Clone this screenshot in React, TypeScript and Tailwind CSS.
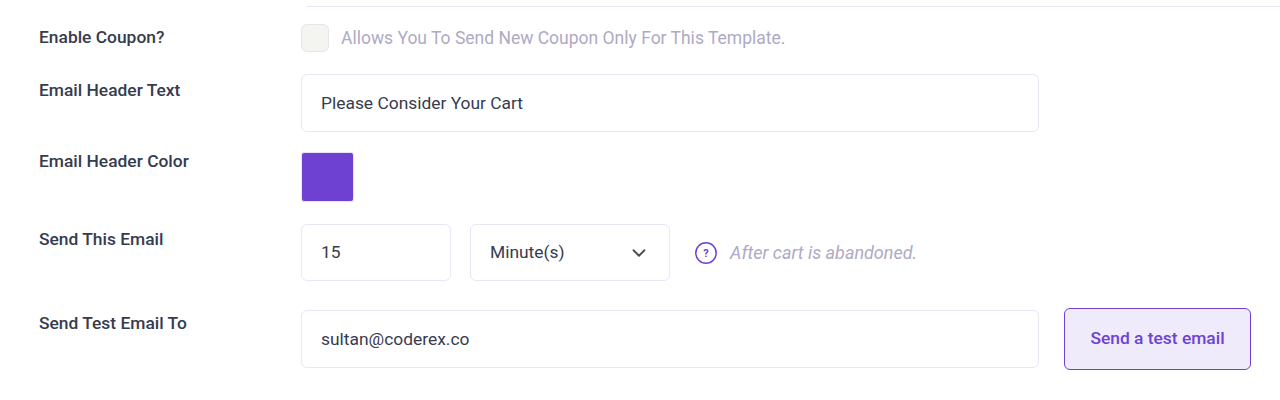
import React from 'react';
import { ChevronDown } from 'lucide-react';

const inputClass =
    'h-[58px] rounded-md border border-[#e9e6f5] bg-white px-[19px] text-[17.4px] text-[#363b4e] outline-none';

const Label: React.FC<{ text: string; className?: string }> = ({ text, className }) => (
    <label className={`w-[262px] shrink-0 text-[17.4px] leading-[24px] font-medium text-[#363b4e] ${className ?? ''}`}>
        {text}
    </label>
);

const App: React.FC = () => {
    return (
        <div className="h-[400px] w-[1280px] overflow-hidden bg-white font-['Roboto',sans-serif]">
            <div className="ml-[307px] h-[7px] border-b border-[#e9e6f5]" />

            <div className="mt-[17px] flex pl-[39px]">
                <Label text="Enable Coupon?" className="mt-[1px]" />
                <div className="flex items-center">
                    <span className="h-[28px] w-[28px] rounded-md border border-[#e6e6e6] bg-[#f4f5f0]" />
                    <span className="ml-3 text-[17.5px] text-[#aeaac4]">Allows You To Send New Coupon Only For This Template.</span>
                </div>
            </div>

            <div className="mt-[22px] flex pl-[39px]">
                <Label text="Email Header Text" className="mt-[4px]" />
                <input readOnly value="Please Consider Your Cart" className={`${inputClass} w-[738px]`} />
            </div>

            <div className="mt-[20px] flex pl-[39px]">
                <Label text="Email Header Color" className="mt-[-3px]" />
                <span className="h-[50px] w-[53px] rounded-[3px] border border-[#e9e6f5] bg-[#6e41d3]" />
            </div>

            <div className="mt-[22px] flex pl-[39px]">
                <Label text="Send This Email" className="mt-[3px]" />
                <div className="flex h-[57px] items-center">
                    <input readOnly value="15" className={`${inputClass} !h-[57px] w-[150px] pb-[2px]`} />
                    <div className="ml-[19px] flex h-[57px] w-[200px] items-center justify-between rounded-md border border-[#e9e6f5] pr-[19px] pl-[19px] text-[17.4px] text-[#363b4e]">
                        <span>Minute(s)</span>
                        <ChevronDown size={22} strokeWidth={2} className="text-[#4a4a55]" />
                    </div>
                    <svg viewBox="0 0 22 22" className="ml-[25px] h-[22px] w-[22px]" fill="none">
                        <circle cx="11" cy="11" r="10.2" stroke="#6e41d3" strokeWidth="1.5" />
                        <text x="11" y="15" textAnchor="middle" fontSize="11" fontWeight="700" fill="#6e41d3" fontFamily="Roboto, sans-serif">?</text>
                    </svg>
                    <span className="ml-[13px] pb-px text-[18px] text-[#aeaac4] italic">After cart is abandoned.</span>
                </div>
            </div>

            <div className="mt-[27px] flex items-center pl-[39px]">
                <Label text="Send Test Email To" className="mb-[32px]" />
                <input readOnly value="sultan@coderex.co" className={`${inputClass} w-[738px]`} />
                <button className="ml-[25px] h-[62px] w-[187px] rounded-md border border-[#6e41d3] bg-[#f0ebfb] pb-[2px] text-[17.4px] font-medium text-[#6e41d3]">
                    Send a test email
                </button>
            </div>
        </div>
    );
};

export default App;
